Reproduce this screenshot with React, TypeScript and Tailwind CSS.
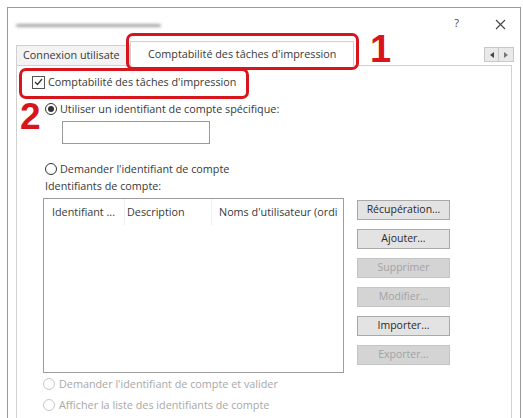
import React from 'react';

const font = 'font-["Open_Sans",sans-serif]';

function Radio({ checked, disabled }: { checked?: boolean; disabled?: boolean }) {
  return (
    <span
      className={`inline-flex w-[12px] h-[12px] rounded-full border items-center justify-center shrink-0 ${
        disabled ? 'border-[#c8c8c8]' : 'border-[#333]'
      }`}
    >
      {checked && <span className="w-[6px] h-[6px] rounded-full bg-[#333]" />}
    </span>
  );
}

function Btn({ label, disabled }: { label: string; disabled?: boolean }) {
  return (
    <div
      className={`h-[20px] w-[93px] flex items-center justify-center border text-[10.5px] ${
        disabled ? 'bg-[#d4d4d4] border-[#c4c4c4] text-[#a2a2a2]' : 'bg-[#e3e3e3] border-[#a9a9a9] text-[#2a2a2a]'
      }`}
    >
      {label}
    </div>
  );
}

export default function App() {
  return (
    <div className={`relative w-[523px] h-[418px] bg-white overflow-hidden pt-[7px] pl-[7px] ${font} text-[#383838] text-[10.8px]`}>
      {/* dialog */}
      <div className="w-[514px] h-[420px] border-l border-t border-r border-[#9a9a9a] flex flex-col">
        {/* title bar */}
        <div className="h-[31px] flex items-center pl-[8px] pr-[14px]">
          <div className="w-[145px] h-[3px] mt-[4px] bg-[#a4a4a4] rounded-full blur-[1.5px]" />
          <div className="flex-1" />
          <span className="text-[11px] text-[#444] mr-[36px]">?</span>
          <svg width="11" height="11" viewBox="0 0 11 11" className="mt-[1px]">
            <path d="M1 1L10 10M10 1L1 10" stroke="#444" strokeWidth="1.1" />
          </svg>
        </div>

        {/* tabs */}
        <div className="flex items-end h-[26px] pl-[8px] pr-[8px]">
          <div className="h-[20px] w-[114px] border border-b-0 border-[#d0d0d0] bg-[#f3f3f3] flex items-center pl-[6px] overflow-hidden whitespace-nowrap">
            Connexion utilisate
          </div>
          <div className="h-[25px] w-[224px] border border-b-0 border-[#d0d0d0] bg-white flex items-center pl-[17px] whitespace-nowrap -mb-px relative z-10">
            Comptabilité des tâches d'impression
          </div>
          <div className="flex-1" />
          <div className="flex mb-[3px] mr-[-2px]">
            <div className="w-[15px] h-[15px] border border-[#c8c8c8] bg-[#e9e9e9] flex items-center justify-center">
              <svg width="4" height="6" viewBox="0 0 4 6"><path d="M4 0L0 3L4 6Z" fill="#444" /></svg>
            </div>
            <div className="w-[15px] h-[15px] border border-l-0 border-[#c8c8c8] bg-[#e9e9e9] flex items-center justify-center">
              <svg width="4" height="6" viewBox="0 0 4 6"><path d="M0 0L4 3L0 6Z" fill="#777" /></svg>
            </div>
          </div>
        </div>

        {/* panel */}
        <div className="ml-[8px] w-[496px] flex-1 border-l border-t border-r border-[#d0d0d0] flex flex-col">
          <div className="mt-[8px] pl-[15px] h-[16px] flex items-center gap-[3px]">
            <span className="w-[13px] h-[13px] border border-[#555] flex items-center justify-center">
              <svg width="9" height="8" viewBox="0 0 9 8"><path d="M1 4L3.5 6.5L8 1" stroke="#333" strokeWidth="1.2" fill="none" /></svg>
            </span>
            <span className="whitespace-nowrap">Comptabilité des tâches d'impression</span>
          </div>

          <div className="mt-[11px] pl-[28px] h-[16px] flex items-center gap-[3px]">
            <Radio checked />
            <span className="whitespace-nowrap">Utiliser un identifiant de compte spécifique:</span>
          </div>
          <div className="mt-[4px] ml-[45px] w-[148px] h-[23px] border border-[#9a9a9a] bg-white" />

          <div className="mt-[17px] pl-[28px] h-[16px] flex items-center gap-[3px]">
            <Radio />
            <span className="whitespace-nowrap">Demander l'identifiant de compte</span>
          </div>
          <div className="mt-[1px] pl-[28px] h-[16px] flex items-center whitespace-nowrap">Identifiants de compte:</div>

          <div className="mt-[4px] flex items-start">
            <div className="ml-[26px] w-[301px] h-[175px] border border-[#9d9d9d] bg-white">
              <div className="flex h-[26px] items-center whitespace-nowrap overflow-hidden">
                <div className="w-[81px] pl-[8px] border-r border-[#eeeeee] h-full flex items-center">Identifiant ...</div>
                <div className="w-[87px] pl-[2px] border-r border-[#eeeeee] h-full flex items-center">Description</div>
                <div className="flex-1 pl-[7px] h-full flex items-center overflow-hidden">Noms d'utilisateur (ordi</div>
              </div>
            </div>
            <div className="ml-[13px] mt-[2px] flex flex-col gap-[9px]">
              <Btn label="Récupération..." />
              <Btn label="Ajouter..." />
              <Btn label="Supprimer" disabled />
              <Btn label="Modifier..." disabled />
              <Btn label="Importer..." />
              <Btn label="Exporter..." disabled />
            </div>
          </div>

          <div className="mt-[3px] pl-[26px] h-[16px] flex items-center gap-[4px] text-[#a8a8a8]">
            <Radio disabled />
            <span className="whitespace-nowrap">Demander l'identifiant de compte et valider</span>
          </div>
          <div className="mt-[5px] pl-[26px] h-[16px] flex items-center gap-[4px] text-[#a8a8a8]">
            <Radio disabled />
            <span className="whitespace-nowrap">Afficher la liste des identifiants de compte</span>
          </div>
        </div>
      </div>

      {/* annotations */}
      <div className="absolute left-[126px] top-[33px] w-[233px] h-[37px] border-[3px] border-[#d8141c] rounded-[7px]" />
      <div className="absolute left-[370px] top-[30px] text-[38px] leading-none font-bold text-[#d8141c] font-['Liberation_Sans',sans-serif]">1</div>
      <div className="absolute left-[19px] top-[68px] w-[230px] h-[31px] border-[3px] border-[#d8141c] rounded-[7px]" />
      <div className="absolute left-[20px] top-[98px] text-[37px] leading-none font-bold text-[#d8141c] font-['Liberation_Sans',sans-serif]">2</div>
    </div>
  );
}
